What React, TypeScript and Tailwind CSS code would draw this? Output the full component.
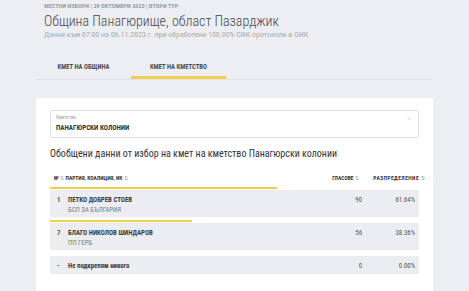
import { ChevronDown } from "lucide-react";

interface Row {
  no: string;
  name: string;
  party?: string;
  votes: number;
  pct: number;
}

const rows: Row[] = [
  { no: "1", name: "ПЕТКО ДОБРЕВ СТОЕВ", party: "БСП ЗА БЪЛГАРИЯ", votes: 90, pct: 61.64 },
  { no: "7", name: "БЛАГО НИКОЛОВ ШИНДАРОВ", party: "ПП ГЕРБ", votes: 56, pct: 38.36 },
  { no: "-", name: "Не подкрепям никого", votes: 0, pct: 0 },
];

function Sort() {
  return <span className="ml-[1.5px] text-[5px] font-normal text-[#9a9ea5]">⇅</span>;
}

export default function App() {
  return (
    <div className="w-[469px] h-[291px] overflow-hidden bg-[#eceef1] text-[#333] font-['Roboto_Condensed',Roboto,sans-serif]">
      {/* Header */}
      <div className="pl-[44px] pt-[3px]">
        <p className="text-[6.2px] leading-[7px] font-bold uppercase text-[#9a9ea5]">
          Местни избори | 29 октомври 2023 | втори тур
        </p>
        <h1 className="mt-[3px] text-[14px] leading-[16px] font-light text-[#45484d]">
          Община Панагюрище, област Пазарджик
        </h1>
        <p className="mt-[1px] text-[7.9px] leading-[9px] text-[#a8acb2]">
          Данни към 07:00 на 06.11.2023 г. при обработени 100.00% СИК протоколи в ОИК
        </p>
      </div>

      {/* Tabs */}
      <div className="mx-[36px] mt-[22px] flex border-b border-[#e2e4e8]">
        <div className="w-[95px] h-[18px] flex items-start justify-center pt-[2px]">
          <span className="text-[6.6px] leading-[8px] font-bold text-[#4a4c50]">КМЕТ НА ОБЩИНА</span>
        </div>
        <div className="w-[95px] h-[18px] flex items-start justify-center pt-[2px] border-b-[3px] border-[#f3cd4c]">
          <span className="text-[6.6px] leading-[8px] font-bold text-[#4a4c50]">КМЕТ НА КМЕТСТВО</span>
        </div>
      </div>

      {/* Card */}
      <div className="ml-[36px] mt-[18px] w-[397px] bg-white px-[14px] pt-[12px] pb-[20px]">
        <div className="relative h-[28px] border border-[#dcdfe3] rounded-[2px] px-[5px] pt-[4px]">
          <p className="text-[5px] leading-[5px] text-[#9a9ea5]">Кметство</p>
          <p className="mt-[4px] text-[7px] leading-[8px] font-bold text-[#333]">ПАНАГЮРСКИ КОЛОНИИ</p>
          <ChevronDown className="absolute right-[5px] top-[4px] w-[7px] h-[7px] text-[#999]" strokeWidth={1.5} />
        </div>

        <h2 className="mt-[9px] text-[10px] leading-[13px] text-[#333]">
          Обобщени данни от избор на кмет на кметство Панагюрски колонии
        </h2>

        <div className="mt-[15px] flex items-center h-[7px] text-[5.5px] font-bold text-[#333]">
          <div className="flex-1 pl-[4px]">
            №<Sort /> ПАРТИЯ, КОАЛИЦИЯ, ИК<Sort />
          </div>
          <div className="w-[30px] text-right">
            ГЛАСОВЕ<Sort />
          </div>
          <div className="w-[66px] text-right -mr-[6px] tracking-[0.45px]">
            РАЗПРЕДЕЛЕНИЕ<Sort />
          </div>
        </div>

        <div className="mt-[5px] flex flex-col gap-[3px]">
          {rows.map((r) => (
            <div key={r.no}>
              <div className="h-[3px] pb-[1px]">
                <div className="h-[2px] bg-[#f3cd4c]" style={{ width: `${r.pct}%` }} />
              </div>
              <div
                className={`flex items-start bg-[#ebedf0] text-[6.8px] leading-[8px] pt-[6px] ${r.party ? "h-[27px]" : "h-[18px]"}`}
              >
                <div className="w-[18px] pl-[7px] font-bold text-[#555]">{r.no}</div>
                <div className="flex-1">
                  <p className="font-bold text-[#3a3c40]">{r.name}</p>
                  {r.party && <p className="mt-[2px] text-[#7a7d82]">{r.party}</p>}
                </div>
                <div className="w-[40px] pr-[3px] text-right text-[#555]">{r.votes}</div>
                <div className="w-[54px] pr-[4px] text-right text-[#555]">{r.pct.toFixed(2)}%</div>
              </div>
            </div>
          ))}
        </div>
      </div>
    </div>
  );
}
